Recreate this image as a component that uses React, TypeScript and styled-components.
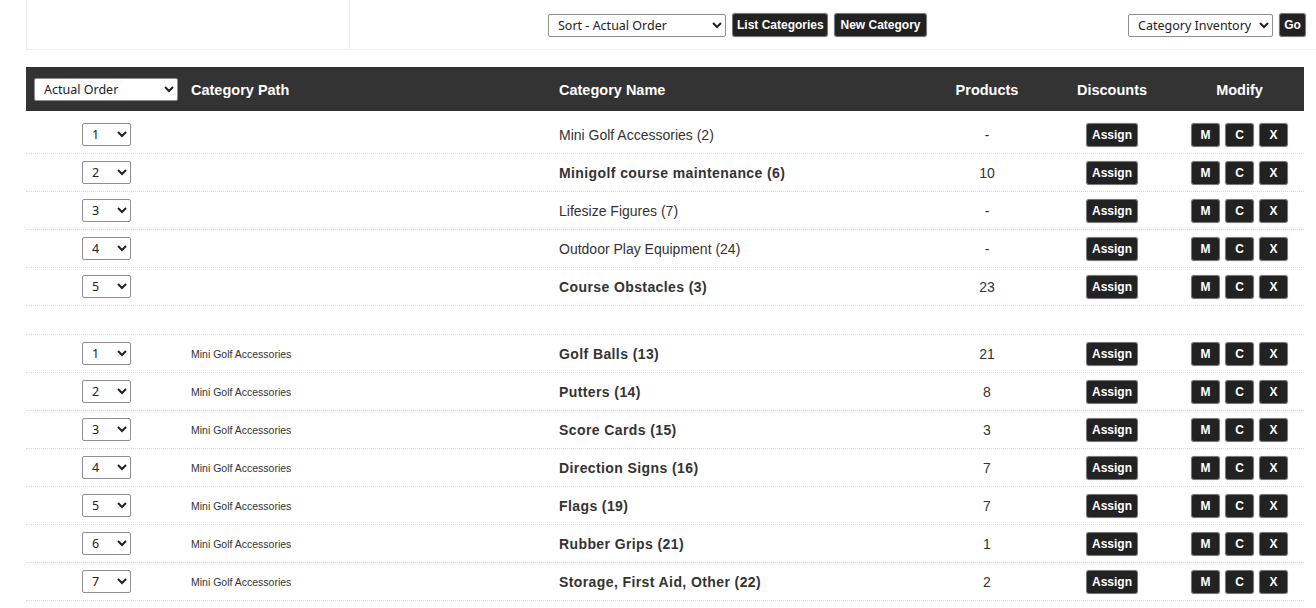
import React from "react";
import styled, { createGlobalStyle } from "styled-components";

const Global = createGlobalStyle`
  html, body { margin: 0; padding: 0; background: #fff; }
  body { font-family: "Liberation Sans", Arial, sans-serif; color: #333; }
`;

const Page = styled.div`
  padding: 0 12px 0 26px;
  width: 1316px;
  box-sizing: border-box;
`;

const TopBox = styled.div`
  display: flex;
  height: 50px;
  margin-right: -12px;
  border-left: 1px solid #eee;
  border-bottom: 1px solid #eee;
  box-sizing: border-box;
`;

const TopLeft = styled.div`
  width: 322px;
  border-right: 1px solid #eee;
`;

const TopRight = styled.div`
  flex: 1;
  display: flex;
  align-items: flex-start;
  padding: 13px 10px 0 198px;
`;

const Group = styled.div<{ $push?: boolean }>`
  display: flex;
  align-items: center;
  gap: 6px;
  margin-left: ${(p) => (p.$push ? "auto" : "0")};
`;

const Select = styled.select<{ $w: number }>`
  width: ${(p) => p.$w}px;
  height: 23px;
  box-sizing: border-box;
  border: 1px solid #8f8f8f;
  border-radius: 2px;
  background: #fff;
  color: #222;
  font-family: "Noto Sans", "Open Sans", sans-serif;
  font-size: 12.5px;
  padding: 0 4px 0 5px;
  margin: 0;
`;

const DarkButton = styled.button<{ $w?: number }>`
  height: 24px;
  ${(p) => (p.$w ? `width: ${p.$w}px;` : "")}
  box-sizing: border-box;
  padding: 0 4px;
  background: #222;
  color: #fff;
  border: 1px solid #7a7a7a;
  border-radius: 3px;
  box-shadow: 0 0 1px rgba(0, 0, 0, 0.4);
  font-family: "Liberation Sans", Arial, sans-serif;
  font-weight: bold;
  font-size: 12px;
  line-height: 22px;
  white-space: nowrap;
  cursor: pointer;
`;

const cols = "161px 368px 370px 124px 126px 1fr";

const HeaderBar = styled.div`
  margin-top: 17px;
  height: 44px;
  padding-top: 2px;
  box-sizing: border-box;
  background: #333;
  display: grid;
  grid-template-columns: ${cols};
  align-items: center;
  color: #fff;
  font-weight: bold;
  font-size: 14.5px;
`;

const HeadCell = styled.div<{ $center?: boolean; $pad?: number }>`
  text-align: ${(p) => (p.$center ? "center" : "left")};
  padding-left: ${(p) => p.$pad ?? 0}px;
`;

const HeadSelectCell = styled.div`
  padding-left: 8px;
  margin-top: -2px;
  display: flex;
`;

const Body = styled.div`
  margin-top: 5px;
`;

const Row = styled.div`
  display: grid;
  grid-template-columns: ${cols};
  align-items: center;
  height: 38px;
  box-sizing: border-box;
  border-bottom: 1px dotted #dadada;
`;

const Spacer = styled.div`
  height: 29px;
  box-sizing: border-box;
  border-bottom: 1px dotted #dadada;
`;

const Cell = styled.div<{ $center?: boolean }>`
  display: flex;
  align-items: center;
  justify-content: ${(p) => (p.$center ? "center" : "flex-start")};
  padding-left: ${(p) => (p.$center ? 0 : 4)}px;
  gap: 5px;
`;

const PathText = styled.span`
  font-size: 10.5px;
  color: #333;
`;

const NameText = styled.span<{ $bold?: boolean }>`
  font-size: 14px;
  font-weight: ${(p) => (p.$bold ? "bold" : "normal")};
  letter-spacing: ${(p) => (p.$bold ? "0.4px" : "0")};
  color: #333;
`;

const Num = styled.span`
  font-size: 14px;
  color: #333;
`;

type Item = { path: string; name: string; bold: boolean; products: string };

const group1: Item[] = [
  { path: "", name: "Mini Golf Accessories (2)", bold: false, products: "-" },
  { path: "", name: "Minigolf course maintenance (6)", bold: true, products: "10" },
  { path: "", name: "Lifesize Figures (7)", bold: false, products: "-" },
  { path: "", name: "Outdoor Play Equipment (24)", bold: false, products: "-" },
  { path: "", name: "Course Obstacles (3)", bold: true, products: "23" },
];

const p = "Mini Golf Accessories";
const group2: Item[] = [
  { path: p, name: "Golf Balls (13)", bold: true, products: "21" },
  { path: p, name: "Putters (14)", bold: true, products: "8" },
  { path: p, name: "Score Cards (15)", bold: true, products: "3" },
  { path: p, name: "Direction Signs (16)", bold: true, products: "7" },
  { path: p, name: "Flags (19)", bold: true, products: "7" },
  { path: p, name: "Rubber Grips (21)", bold: true, products: "1" },
  { path: p, name: "Storage, First Aid, Other (22)", bold: true, products: "2" },
];

function DataRow({ item, index, count }: { item: Item; index: number; count: number }) {
  return (
    <Row>
      <Cell $center>
        <Select $w={49} defaultValue={String(index + 1)}>
          {Array.from({ length: count }, (_, i) => (
            <option key={i} value={String(i + 1)}>
              {i + 1}
            </option>
          ))}
        </Select>
      </Cell>
      <Cell>
        <PathText>{item.path}</PathText>
      </Cell>
      <Cell>
        <NameText $bold={item.bold}>{item.name}</NameText>
      </Cell>
      <Cell $center>
        <Num>{item.products}</Num>
      </Cell>
      <Cell $center>
        <DarkButton $w={52}>Assign</DarkButton>
      </Cell>
      <Cell $center>
        <DarkButton $w={29}>M</DarkButton>
        <DarkButton $w={29}>C</DarkButton>
        <DarkButton $w={29}>X</DarkButton>
      </Cell>
    </Row>
  );
}

export default function App() {
  return (
    <>
      <Global />
      <Page>
        <TopBox>
          <TopLeft />
          <TopRight>
            <Group>
              <Select $w={178} defaultValue="actual">
                <option value="actual">Sort - Actual Order</option>
                <option value="alpha">Sort - Alphabetical</option>
              </Select>
              <DarkButton $w={96}>List Categories</DarkButton>
              <DarkButton $w={93}>New Category</DarkButton>
            </Group>
            <Group $push>
              <Select $w={145} defaultValue="inv">
                <option value="inv">Category Inventory</option>
              </Select>
              <DarkButton $w={27}>Go</DarkButton>
            </Group>
          </TopRight>
        </TopBox>
        <HeaderBar>
          <HeadSelectCell>
            <Select $w={144} defaultValue="actual">
              <option value="actual">Actual Order</option>
              <option value="alpha">Alphabetical</option>
            </Select>
          </HeadSelectCell>
          <HeadCell $pad={4}>Category Path</HeadCell>
          <HeadCell $pad={4}>Category Name</HeadCell>
          <HeadCell $center>Products</HeadCell>
          <HeadCell $center>Discounts</HeadCell>
          <HeadCell $center>Modify</HeadCell>
        </HeaderBar>
        <Body>
          {group1.map((it, i) => (
            <DataRow key={"a" + i} item={it} index={i} count={group1.length} />
          ))}
          <Spacer />
          {group2.map((it, i) => (
            <DataRow key={"b" + i} item={it} index={i} count={group2.length} />
          ))}
        </Body>
      </Page>
    </>
  );
}
